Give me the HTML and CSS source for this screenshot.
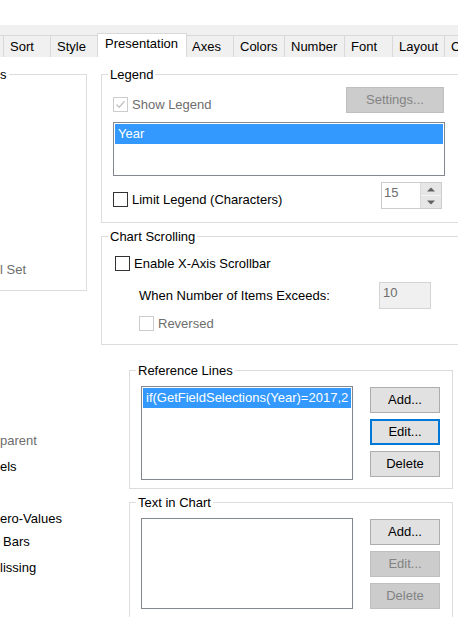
FILE: index.html
```html
<!DOCTYPE html>
<html>
<head>
<meta charset="utf-8">
<link rel="stylesheet" href="styles.css">
</head>
<body>
<div class="top"></div>
<div class="tabbar">
  <div class="tab edge"></div>
  <div class="tab w47">Sort</div>
  <div class="tab w47">Style</div>
  <div class="tab sel">Presentation</div>
  <div class="tab w46 after-sel">Axes</div>
  <div class="tab w51">Colors</div>
  <div class="tab w60">Number</div>
  <div class="tab w48">Font</div>
  <div class="tab w52">Layout</div>
  <div class="tab w60">C</div>
</div>
<div class="main">
  <div class="leftcol">
    <fieldset class="group leftbox">
      <legend class="gtitle gtitle-left">s</legend>
      <div class="leftbox-body"><span class="dis">l Set</span></div>
    </fieldset>
    <div class="lbl dis l1">parent</div>
    <div class="lbl l2">els</div>
    <div class="lbl l3">ero-Values</div>
    <div class="lbl l4">Bars</div>
    <div class="lbl l5">lissing</div>
  </div>
  <div class="rightcol">
    <fieldset class="group wide">
      <legend class="gtitle">Legend</legend>
      <div class="legend-body">
        <div class="row-top">
          <label class="chk dis chk-low"><span class="box disabled"><svg viewBox="0 0 13 13" width="13" height="13"><path d="M2.5 6.5 L5.2 9.2 L10.5 3.3" fill="none" stroke="#c4c4c4" stroke-width="1.4"/></svg></span>Show Legend</label>
          <div class="btn disabled settings">Settings...</div>
        </div>
        <div class="listbox lb-legend"><div class="item">Year</div></div>
        <div class="row-top row-limit">
          <label class="chk chk-low"><span class="box"></span>Limit Legend (Characters)</label>
          <div class="spin">
            <div class="spin-val">15</div>
            <div class="spin-btns">
              <div class="spin-b"><svg viewBox="0 0 8 5" width="8" height="5"><path d="M0 4.5 L4 0.5 L8 4.5Z" fill="#606060"/></svg></div>
              <div class="spin-b"><svg viewBox="0 0 8 5" width="8" height="5"><path d="M0 0.5 L4 4.5 L8 0.5Z" fill="#606060"/></svg></div>
            </div>
          </div>
        </div>
      </div>
    </fieldset>

    <fieldset class="group wide gap6">
      <legend class="gtitle">Chart Scrolling</legend>
      <div class="scroll-body">
        <label class="chk"><span class="box"></span>Enable X-Axis Scrollbar</label>
        <div class="exceed-row">
          <span class="exceed-lbl">When Number of Items Exceeds:</span>
          <div class="numbox">10</div>
        </div>
        <label class="chk dis indent"><span class="box disabled"></span>Reversed</label>
      </div>
    </fieldset>

    <fieldset class="group narrow gap18">
      <legend class="gtitle">Reference Lines</legend>
      <div class="list-body">
        <div class="listbox lb-ref"><div class="item">if(GetFieldSelections(Year)=2017,2</div></div>
        <div class="btncol">
          <div class="btn">Add...</div>
          <div class="btn focus">Edit...</div>
          <div class="btn">Delete</div>
        </div>
      </div>
    </fieldset>

    <fieldset class="group narrow gap6 last">
      <legend class="gtitle">Text in Chart</legend>
      <div class="list-body">
        <div class="listbox lb-text"></div>
        <div class="btncol">
          <div class="btn">Add...</div>
          <div class="btn disabled">Edit...</div>
          <div class="btn disabled">Delete</div>
        </div>
      </div>
    </fieldset>
  </div>
</div>
</body>
</html>
```

FILE: styles.css
```css
html, body {
  margin: 0;
  padding: 0;
}
body {
  width: 458px;
  height: 617px;
  overflow: hidden;
  background: #ffffff;
  font-family: "Liberation Sans", Arial, sans-serif;
  font-size: 13px;
  line-height: 15px;
  color: #000000;
}
.top {
  height: 25px;
  background: #ffffff;
}
.tabbar {
  height: 32px;
  background: #f0f0f0;
  display: flex;
  align-items: flex-end;
  white-space: nowrap;
}
.tab {
  flex: none;
  box-sizing: border-box;
  height: 22px;
  border-top: 1px solid #d9d9d9;
  border-left: 1px solid #d9d9d9;
  padding: 3px 0 0 6px;
  background: #f0f0f0;
}
.tab.edge {
  width: 3px;
  padding: 0;
  border-left: none;
}
.tab.sel {
  width: 90px;
  height: 24px;
  background: #ffffff;
  border-right: 1px solid #d9d9d9;
  padding: 2px 0 0 7px;
}
.tab.after-sel {
  border-left: none;
  padding-left: 5px;
}
.w46 { width: 46px; }
.w47 { width: 47px; }
.w48 { width: 48px; }
.w51 { width: 51px; }
.w52 { width: 52px; }
.w60 { width: 60px; }

.main {
  display: flex;
  align-items: flex-start;
  padding-top: 10px;
}
.leftcol {
  flex: none;
  width: 87px;
  display: flex;
  flex-direction: column;
}
.rightcol {
  flex: none;
  width: 400px;
  margin-left: 14px;
  display: flex;
  flex-direction: column;
}

.group {
  margin: 0;
  padding: 0;
  border: 1px solid #dcdcdc;
  min-width: 0;
  box-sizing: border-box;
}
.gtitle {
  padding: 0 2px;
  margin-left: 6px;
  line-height: 15px;
  color: #000000;
}
.leftbox {
  margin-left: -20px;
  width: 107px;
}
.gtitle-left {
  margin-left: 17px;
}
.leftbox-body {
  box-sizing: border-box;
  height: 208px;
  display: flex;
  flex-direction: column;
  justify-content: flex-end;
  padding: 0 0 13px 19px;
}
.dis {
  color: #6d6d6d;
}
.lbl {
  white-space: nowrap;
}
.l1 { margin-top: 142px; }
.l2 { margin-top: 11px; }
.l3 { margin-top: 37px; }
.l4 { margin-top: 8px; padding-left: 3px; }
.l5 { margin-top: 11px; }

.wide {
  width: 380px;
}
.narrow {
  width: 324px;
  margin-left: 28px;
}
.gap6 { margin-top: 6px; }
.gap18 { margin-top: 18px; }
.last { height: 200px; }

.legend-body {
  padding: 5px 0 13px 11px;
}
.row-top {
  width: 332px;
  height: 26px;
  display: flex;
  justify-content: space-between;
  align-items: flex-start;
}
.row-limit {
  margin-top: 6px;
  height: 27px;
}
.chk {
  display: flex;
  align-items: center;
  white-space: nowrap;
  height: 15px;
}
.chk-low {
  margin-top: 10px;
}
.box {
  flex: none;
  box-sizing: border-box;
  width: 15px;
  height: 15px;
  border: 1px solid #333333;
  background: #ffffff;
  margin-right: 4px;
  display: flex;
  align-items: center;
  justify-content: center;
}
.box.disabled {
  border-color: #cccccc;
}
.box svg {
  display: block;
}

.btn {
  box-sizing: border-box;
  width: 70px;
  height: 26px;
  border: 1px solid #adadad;
  background: #e1e1e1;
  text-align: center;
  line-height: 24px;
  color: #000000;
}
.btn.focus {
  border: 2px solid #0078d7;
  line-height: 22px;
}
.btn.disabled {
  background: #cccccc;
  border-color: #bfbfbf;
  color: #838383;
}
.settings {
  width: 98px;
  margin-right: 1px;
}

.listbox {
  box-sizing: border-box;
  border: 1px solid #828790;
  padding: 1px;
  background: #ffffff;
  overflow: hidden;
}
.item {
  height: 20px;
  line-height: 20px;
  background: #3399ff;
  color: #ffffff;
  padding-left: 3px;
  white-space: nowrap;
  overflow: hidden;
}
.lb-legend {
  width: 332px;
  height: 54px;
  margin-top: 9px;
}
.spin {
  box-sizing: border-box;
  width: 61px;
  height: 27px;
  margin-right: 3px;
  border: 1px solid #cccccc;
  display: flex;
  background: #ffffff;
}
.spin-val {
  flex: 1;
  padding: 2px 0 0 2px;
  color: #6d6d6d;
}
.spin-btns {
  width: 20px;
  display: flex;
  flex-direction: column;
  border-left: 1px solid #d9d9d9;
}
.spin-b {
  flex: 1;
  background: #e6e6e6;
  display: flex;
  align-items: center;
  justify-content: center;
}
.spin-b + .spin-b {
  border-top: 1px solid #f4f4f4;
}
.spin-b svg {
  display: block;
}

.scroll-body {
  padding: 12px 0 13px 13px;
}
.exceed-row {
  margin-top: 11px;
  height: 27px;
  display: flex;
  align-items: center;
}
.exceed-lbl {
  width: 240px;
  margin-left: 24px;
  white-space: nowrap;
}
.numbox {
  box-sizing: border-box;
  width: 52px;
  height: 27px;
  border: 1px solid #d4d4d4;
  background: #f0f0f0;
  color: #6d6d6d;
  padding: 2px 0 0 3px;
}
.indent {
  margin-top: 7px;
  margin-left: 24px;
}

.list-body {
  display: flex;
  align-items: flex-start;
  padding: 8px 0 8px 11px;
}
.lb-ref {
  width: 212px;
  height: 94px;
}
.lb-text {
  width: 212px;
  height: 91px;
}
.btncol {
  margin-left: 17px;
  margin-top: 1px;
  display: flex;
  flex-direction: column;
  gap: 6px;
}
```
